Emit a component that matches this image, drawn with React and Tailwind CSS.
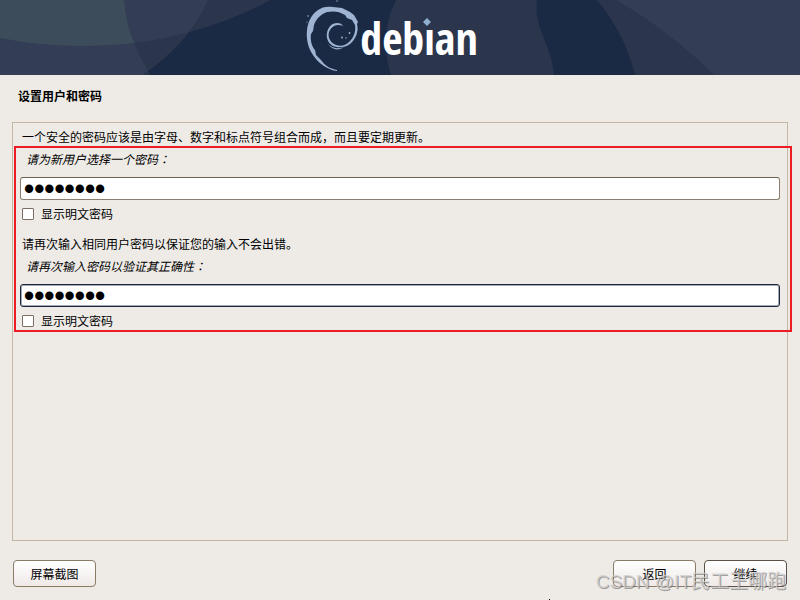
import React, { useState } from 'react';

const fields = [
  {
    id: 'password',
    description: '一个安全的密码应该是由字母、数字和标点符号组合而成，而且要定期更新。',
    label: '请为新用户选择一个密码',
    inputClass: 'border-[#8b7d6f] border-t-[#6f6455]',
  },
  {
    id: 'password-again',
    description: '请再次输入相同用户密码以保证您的输入不会出错。',
    label: '请再次输入密码以验证其正确性',
    inputClass: 'border-[#1f2538] shadow-[inset_0_0_0_1px_#a3a9b8]',
  },
];

function Swirl() {
  return (
    <svg className="w-[54px] h-[75px] shrink-0" viewBox="306 0 54 75" fill="#9fb4d3" aria-hidden="true">
      <path d="M337 71 C328 70 319 64 313 55 C308 48 306 39 307 30 C308 21 312 14 318 10 C322 7 327 6 333 7 L342 8 L350 12 L354 15 L358 22 L357 24 C359 31 356 39 350 44 C345 48 338 48 333 46 C328 43 326 38 327 33 C328 27 332 23 337 23 C340 23 342 24 343 26 C338 24 333 25 330 30 C327 35 329 41 334 44 C339 47 346 46 350 41 C354 37 356 31 355 25 L352 20 L347 18 L345 15 C339 11 333 11 327 12 C321 14 316 19 314 25 L313 31 L311 34 C310 40 312 47 315 50 L316 55 L321 60 C325 66 331 69 337 70 Z" />
      <path d="M328 44 C333 49 339 49 344 47 C339 51 332 50 328 44 Z" />
      <circle cx="342" cy="37.5" r="0.9" />
      <circle cx="349.5" cy="33" r="0.9" />
      <circle cx="346" cy="38" r="0.7" />
      <circle cx="337" cy="1" r="0.7" />
      <circle cx="308" cy="16" r="0.8" />
      <circle cx="307" cy="22" r="0.6" />
    </svg>
  );
}

function Banner() {
  return (
    <header className="relative h-[75px] shrink-0 overflow-hidden bg-[#1a2a44]">
      <svg className="absolute inset-0 w-full h-full" viewBox="0 0 800 75" preserveAspectRatio="none" aria-hidden="true">
        <path d="M0 0 H270 Q234 20 189 32 Q171 54 143 75 H0 Z" fill="#333d55" />
        <path d="M0 0 H124 Q126 24 134 43 Q67 51 0 38 Z" fill="#3d4c5b" />
        <path d="M208 0 H270 Q234 20 189 32 Q200 17 208 0 Z" fill="#2b354c" />
        <path d="M134 43 Q160 40 189 32 Q172 54 148 71 Q140 58 134 43 Z" fill="#2b354c" />
        <path d="M148 71 L150 75 H143 Z" fill="#2b354c" />
        <path d="M396 0 H537 C533 28 551 42 554 75 H391 C383 50 384 24 396 0 Z" fill="#2b354c" />
        <path d="M597 0 H800 V75 H635 Q625 34 597 0 Z" fill="#2b354c" />
        <path d="M616 0 H800 V75 H714 Q667 29 616 0 Z" fill="#333d55" />
      </svg>
      <div className="relative flex h-full items-center justify-center pr-4">
        <Swirl />
        <span className="relative font-['Open_Sans_Condensed','Noto_Sans_Condensed','Roboto_Condensed','DejaVu_Sans_Condensed',sans-serif] text-[44px] leading-none font-semibold text-white">
          debıan
          <svg className="absolute left-[63px] top-0.5 w-2 h-2" viewBox="0 0 8 8" fill="#8fb0cf" aria-hidden="true">
            <path d="M4 0 L8 4 L4 8 L0 4 Z" />
          </svg>
        </span>
      </div>
    </header>
  );
}

function PasswordField({ field }) {
  const [value, setValue] = useState('12345678');
  const [visible, setVisible] = useState(false);

  return (
    <div>
      <p className="pl-[9px]">{field.description}</p>
      <label htmlFor={field.id} className="mt-0.5 block pl-[13px] italic">
        {field.label}
        <span className="font-['Noto_Sans_CJK_TC',sans-serif]">：</span>
      </label>
      <div className="mt-2 px-[7px]">
        <input
          id={field.id}
          type={visible ? 'text' : 'password'}
          value={value}
          onChange={(e) => setValue(e.target.value)}
          className={`block h-[23px] w-full rounded-[3px] border bg-white px-[3px] font-['Liberation_Sans',sans-serif] outline-none ${
            visible ? 'text-xs' : 'pt-0.5 text-[29px] font-bold'
          } ${field.inputClass}`}
        />
      </div>
      <label className="mt-1 flex items-center gap-[7px] pl-[9px]">
        <input
          type="checkbox"
          checked={visible}
          onChange={(e) => setVisible(e.target.checked)}
          className="h-3 w-3 appearance-none rounded-[1px] border border-[#7d6f62] bg-white checked:bg-[#1a2a44]"
        />
        显示明文密码
      </label>
    </div>
  );
}

function Button({ children, dark }) {
  return (
    <button
      type="button"
      className={`h-[27px] w-[83px] rounded border bg-gradient-to-b from-white to-[#efe9e7] ${
        dark ? 'border-[#5b5146]' : 'border-[#8b7a66]'
      }`}
    >
      {children}
    </button>
  );
}

export default function App() {
  return (
    <div className="relative flex min-h-screen flex-col overflow-hidden bg-[#eeebe7] font-['Noto_Sans_CJK_SC',sans-serif] text-xs leading-5 text-black">
      <Banner />

      <h1 className="mt-[11px] pl-[18px] font-bold">设置用户和密码</h1>

      <main className="mx-3 mt-4 flex-1 border border-[#c4b5a4] pt-1">
        <div className="relative flex flex-col gap-2.5">
          {fields.map((field) => (
            <PasswordField key={field.id} field={field} />
          ))}
          <div className="pointer-events-none absolute -bottom-px left-px -right-[5px] top-[19px] border-2 border-[#ed1c24]" />
        </div>
      </main>

      <footer className="flex items-center gap-2 px-[13px] pt-[19px] pb-[13px]">
        <Button>屏幕截图</Button>
        <div className="flex-1" />
        <Button>返回</Button>
        <Button dark>继续</Button>
      </footer>

      <div className="pointer-events-none absolute bottom-1.5 right-[14px] font-['Liberation_Sans','Noto_Sans_CJK_SC',sans-serif] text-[19px] leading-6 whitespace-nowrap text-[#d2d0ce]/80 [text-shadow:1px_1px_0_#66666699]">
        CSDN @IT民工王哪跑
      </div>
      <div className="absolute bottom-0 left-[549px] h-px w-px bg-black" />
    </div>
  );
}
